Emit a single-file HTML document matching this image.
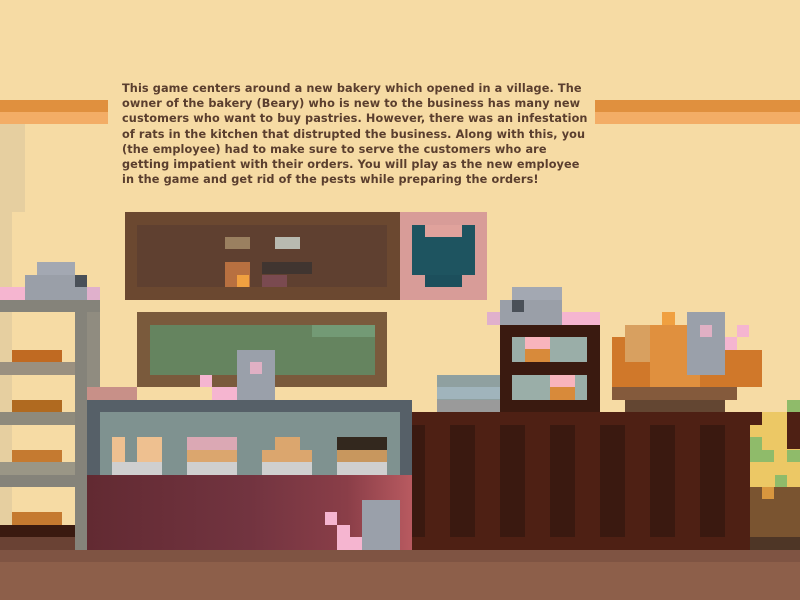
<!DOCTYPE html>
<html><head><meta charset="utf-8"><style>
*{margin:0;padding:0}
body{width:800px;height:600px;overflow:hidden;background:#f6dba4;position:relative;font-family:"Liberation Sans",sans-serif}
div{position:absolute}
.t{left:122px;top:81px;white-space:nowrap;font-family:"DejaVu Sans",sans-serif;font-size:11.3px;line-height:15.2px;color:#5a3e2e;font-weight:bold;letter-spacing:0.1px}
</style></head><body>
<!-- stripes -->
<div style="left:0;top:100px;width:108px;height:12px;background:#e0903e"></div>
<div style="left:0;top:112px;width:108px;height:12px;background:#f3ad66"></div>
<div style="left:595px;top:100px;width:205px;height:12px;background:#e0903e"></div>
<div style="left:595px;top:112px;width:205px;height:12px;background:#f3ad66"></div>
<!-- left wall -->
<div style="left:0;top:124px;width:12px;height:426px;background:#e6cfa0"></div>
<div style="left:12px;top:124px;width:13px;height:88px;background:#e6cfa0"></div>
<div class="t">This game centers around a new bakery which opened in a village. The<br>owner of the bakery (Beary) who is new to the business has many new<br>customers who want to buy pastries. However, there was an infestation<br>of rats in the kitchen that distrupted the business. Along with this, you<br>(the employee) had to make sure to serve the customers who are<br>getting impatient with their orders. You will play as the new employee<br>in the game and get rid of the pests while preparing the orders!</div>

<!-- painting -->
<div style="left:125px;top:212px;width:275px;height:88px;background:#6b4830"></div>
<div style="left:137px;top:225px;width:250px;height:62px;background:#5f4030"></div>
<div style="left:225px;top:237px;width:25px;height:12px;background:#9a8060"></div>
<div style="left:275px;top:237px;width:25px;height:12px;background:#b8bab0"></div>
<div style="left:225px;top:262px;width:25px;height:25px;background:#b87040"></div>
<div style="left:237px;top:275px;width:12px;height:12px;background:#f0a040"></div>
<div style="left:262px;top:262px;width:50px;height:12px;background:#403530"></div>
<div style="left:262px;top:275px;width:25px;height:12px;background:#7a4a50"></div>
<div style="left:400px;top:212px;width:87px;height:88px;background:#d89c98"></div>
<div style="left:412px;top:225px;width:63px;height:50px;background:#1e5460"></div>
<div style="left:425px;top:225px;width:37px;height:12px;background:#e0a29c"></div>
<div style="left:425px;top:275px;width:37px;height:12px;background:#1c4f5c"></div>

<!-- left shelf -->
<div style="left:37px;top:262px;width:38px;height:13px;background:#a3a8b2"></div>
<div style="left:25px;top:275px;width:62px;height:25px;background:#9a9fa8"></div>
<div style="left:75px;top:275px;width:12px;height:12px;background:#4a5058"></div>
<div style="left:0;top:287px;width:25px;height:13px;background:#f5b5d0"></div>
<div style="left:87px;top:287px;width:13px;height:13px;background:#e0b0cc"></div>
<div style="left:0;top:300px;width:100px;height:12px;background:#85837a"></div>
<div style="left:75px;top:312px;width:12px;height:238px;background:#85837a"></div>
<div style="left:87px;top:312px;width:13px;height:88px;background:#908c80"></div>
<div style="left:12px;top:350px;width:50px;height:12px;background:#c06a22"></div>
<div style="left:0;top:362px;width:75px;height:13px;background:#9a9080"></div>
<div style="left:12px;top:400px;width:50px;height:12px;background:#b06a20"></div>
<div style="left:0;top:412px;width:75px;height:13px;background:#8e8a7c"></div>
<div style="left:12px;top:450px;width:50px;height:12px;background:#c57a30"></div>
<div style="left:0;top:462px;width:75px;height:13px;background:#9a9686"></div>
<div style="left:0;top:475px;width:75px;height:12px;background:#85837a"></div>
<div style="left:12px;top:512px;width:50px;height:13px;background:#c57a30"></div>
<div style="left:0;top:525px;width:75px;height:12px;background:#3a1a10"></div>
<div style="left:0;top:537px;width:75px;height:13px;background:#6a4234"></div>

<!-- green board -->
<div style="left:137px;top:312px;width:250px;height:75px;background:#7a5a3c"></div>
<div style="left:150px;top:325px;width:225px;height:50px;background:#65845f"></div>
<div style="left:312px;top:325px;width:63px;height:12px;background:#739a75"></div>
<div style="left:200px;top:375px;width:12px;height:12px;background:#f5b5d0"></div>
<div style="left:212px;top:387px;width:25px;height:13px;background:#f5b5d0"></div>
<div style="left:237px;top:350px;width:38px;height:50px;background:#9aa0aa"></div>
<div style="left:250px;top:362px;width:12px;height:12px;background:#e0b0c4"></div>
<div style="left:87px;top:387px;width:50px;height:13px;background:#c89088"></div>

<!-- display case -->
<div style="left:87px;top:400px;width:325px;height:75px;background:#566068"></div>
<div style="left:100px;top:412px;width:300px;height:63px;background:#7f9290"></div>
<div style="left:112px;top:437px;width:13px;height:25px;background:#eec090"></div>
<div style="left:137px;top:437px;width:25px;height:25px;background:#eec090"></div>
<div style="left:187px;top:437px;width:50px;height:13px;background:#dba8b4"></div>
<div style="left:187px;top:450px;width:50px;height:12px;background:#dba66e"></div>
<div style="left:275px;top:437px;width:25px;height:13px;background:#dba66e"></div>
<div style="left:262px;top:450px;width:50px;height:12px;background:#dba66e"></div>
<div style="left:337px;top:437px;width:50px;height:13px;background:#33281e"></div>
<div style="left:337px;top:450px;width:50px;height:12px;background:#c8975e"></div>
<div style="left:112px;top:462px;width:50px;height:13px;background:#cfcfcf"></div>
<div style="left:187px;top:462px;width:50px;height:13px;background:#cfcfcf"></div>
<div style="left:262px;top:462px;width:50px;height:13px;background:#cfcfcf"></div>
<div style="left:337px;top:462px;width:50px;height:13px;background:#cfcfcf"></div>
<div style="left:87px;top:475px;width:325px;height:75px;background:linear-gradient(90deg,#622a32,#723440 50%,#8a3e48 80%,#b85a60)"></div>
<div style="left:362px;top:500px;width:38px;height:50px;background:#9aa0aa"></div>
<div style="left:325px;top:512px;width:12px;height:13px;background:#f5b5d0"></div>
<div style="left:337px;top:525px;width:13px;height:25px;background:#f5b5d0"></div>
<div style="left:350px;top:537px;width:12px;height:13px;background:#f5b5d0"></div>

<!-- right counter -->
<div style="left:412px;top:412px;width:350px;height:138px;background:#4e2014"></div>
<div style="left:412px;top:425px;width:13px;height:112px;background:#3a1910"></div>
<div style="left:450px;top:425px;width:25px;height:112px;background:#3a1910"></div>
<div style="left:500px;top:425px;width:25px;height:112px;background:#3a1910"></div>
<div style="left:550px;top:425px;width:25px;height:112px;background:#3a1910"></div>
<div style="left:600px;top:425px;width:25px;height:112px;background:#3a1910"></div>
<div style="left:650px;top:425px;width:25px;height:112px;background:#3a1910"></div>
<div style="left:700px;top:425px;width:25px;height:112px;background:#3a1910"></div>

<!-- cabinet -->
<div style="left:437px;top:375px;width:63px;height:37px;background:#8fa0a0"></div>
<div style="left:437px;top:387px;width:63px;height:12px;background:#a0b4bc"></div>
<div style="left:437px;top:400px;width:63px;height:12px;background:#9a9a9a"></div>
<div style="left:500px;top:325px;width:100px;height:87px;background:#3a1a10"></div>
<div style="left:512px;top:337px;width:75px;height:25px;background:#9aaea8"></div>
<div style="left:525px;top:337px;width:25px;height:12px;background:#f8b4bc"></div>
<div style="left:525px;top:349px;width:25px;height:13px;background:#d88a3a"></div>
<div style="left:512px;top:375px;width:75px;height:25px;background:#9aaea8"></div>
<div style="left:550px;top:375px;width:25px;height:12px;background:#f8b4bc"></div>
<div style="left:550px;top:387px;width:25px;height:13px;background:#d88a3a"></div>
<div style="left:512px;top:287px;width:50px;height:25px;background:#a3a8b2"></div>
<div style="left:500px;top:300px;width:62px;height:25px;background:#9a9fa8"></div>
<div style="left:512px;top:300px;width:12px;height:12px;background:#4a5058"></div>
<div style="left:487px;top:312px;width:13px;height:13px;background:#e0b0cc"></div>
<div style="left:562px;top:312px;width:38px;height:13px;background:#f5b5d0"></div>

<!-- bread -->
<div style="left:600px;top:337px;width:162px;height:50px;background:#d0782a"></div>
<div style="left:625px;top:325px;width:75px;height:12px;background:#f6dba4"></div>
<div style="left:725px;top:337px;width:37px;height:13px;background:#f6dba4"></div>
<div style="left:625px;top:325px;width:50px;height:37px;background:#d8a060"></div>
<div style="left:650px;top:325px;width:50px;height:62px;background:#e0903e"></div>
<div style="left:662px;top:312px;width:13px;height:13px;background:#f0a040"></div>
<div style="left:600px;top:337px;width:12px;height:50px;background:#f6dba4"></div>
<div style="left:687px;top:312px;width:38px;height:63px;background:#9aa0aa"></div>
<div style="left:700px;top:325px;width:12px;height:12px;background:#e0b0c4"></div>
<div style="left:737px;top:325px;width:12px;height:12px;background:#f5b5d0"></div>
<div style="left:725px;top:337px;width:12px;height:13px;background:#f5b5d0"></div>
<div style="left:612px;top:387px;width:125px;height:13px;background:#845a3c"></div>
<div style="left:625px;top:400px;width:100px;height:12px;background:#634632"></div>

<!-- plant -->
<div style="left:750px;top:425px;width:50px;height:62px;background:#ecc865"></div>
<div style="left:762px;top:412px;width:25px;height:13px;background:#ecc865"></div>
<div style="left:787px;top:400px;width:13px;height:12px;background:#8fbb6a"></div>
<div style="left:787px;top:412px;width:13px;height:37px;background:#4e2014"></div>
<div style="left:750px;top:437px;width:12px;height:25px;background:#8fbb6a"></div>
<div style="left:762px;top:450px;width:12px;height:12px;background:#8fbb6a"></div>
<div style="left:787px;top:450px;width:13px;height:12px;background:#8fbb6a"></div>
<div style="left:775px;top:475px;width:12px;height:12px;background:#8fbb6a"></div>
<div style="left:750px;top:487px;width:50px;height:63px;background:#7a5430"></div>
<div style="left:762px;top:487px;width:12px;height:12px;background:#d8963e"></div>
<div style="left:750px;top:537px;width:50px;height:13px;background:#4e3626"></div>

<!-- floor -->
<div style="left:0;top:550px;width:800px;height:12px;background:#7f5443"></div>
<div style="left:0;top:562px;width:800px;height:38px;background:#8d5f4a"></div>
</body></html>
